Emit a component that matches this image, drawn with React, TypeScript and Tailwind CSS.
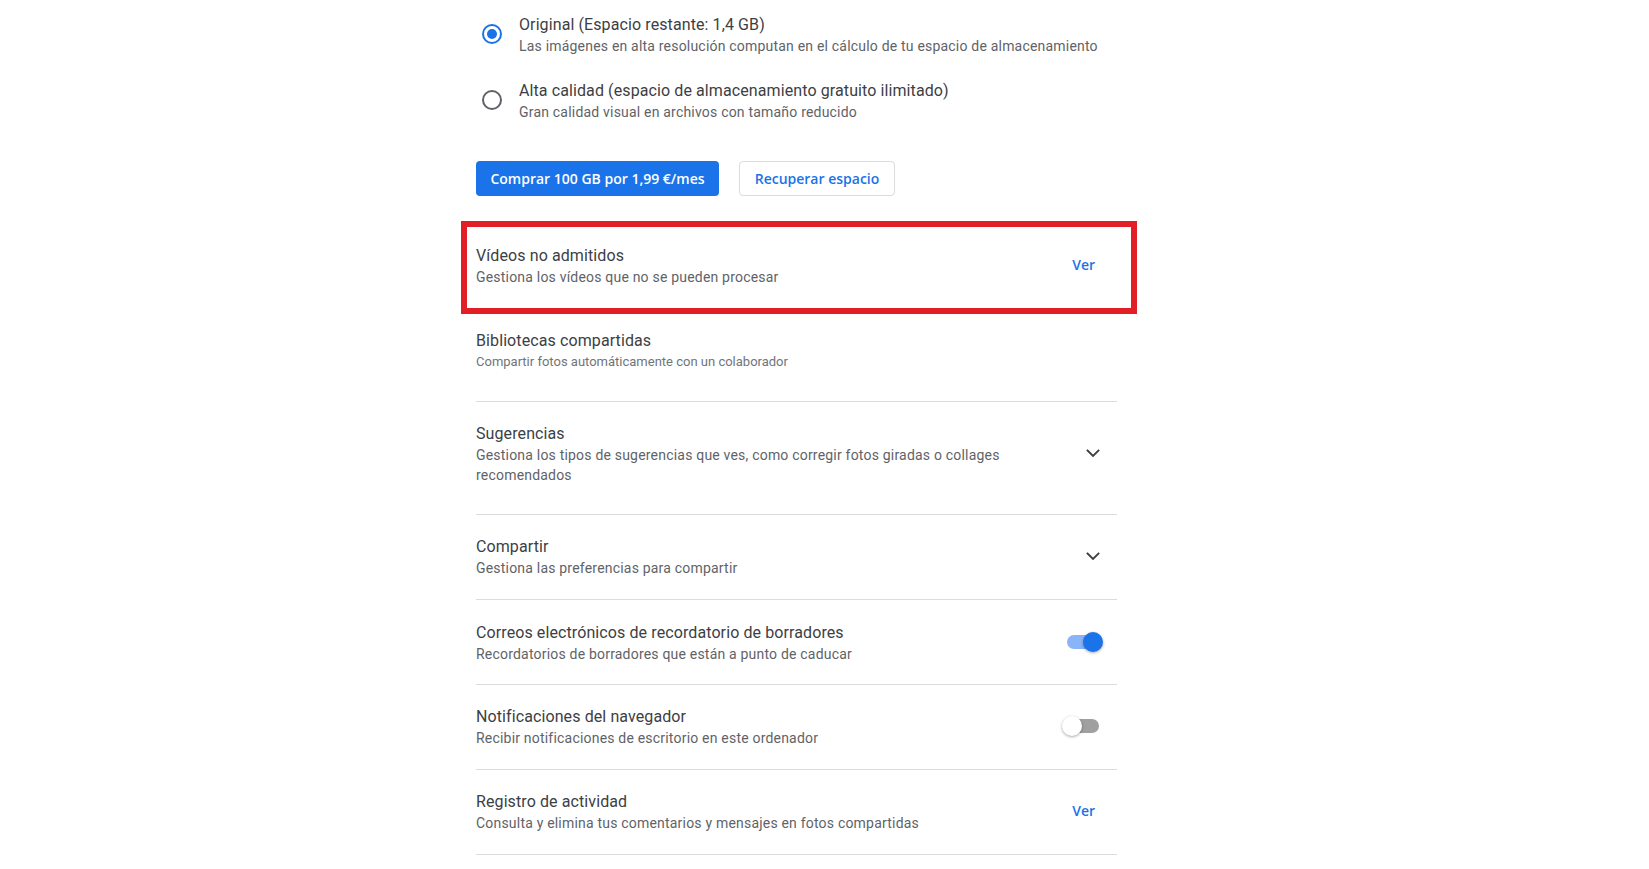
import React from "react";

function Radio({ selected }: { selected?: boolean }) {
  return (
    <div
      className={
        "ml-[6px] flex h-[20px] w-[20px] shrink-0 items-center justify-center rounded-full border-2 " +
        (selected ? "border-[#1a73e8]" : "border-[#5f6368]")
      }
    >
      {selected && <div className="h-[10px] w-[10px] rounded-full bg-[#1a73e8]" />}
    </div>
  );
}

function Title({ children }: { children: React.ReactNode }) {
  return <div className="pt-[2px] text-[16px] leading-[22px] tracking-[0.1px] text-[#3c4043]">{children}</div>;
}

function RadioRow({ selected, title, sub }: { selected?: boolean; title: string; sub: string }) {
  return (
    <div className="flex items-center gap-[17px]">
      <Radio selected={selected} />
      <div className="flex flex-col">
        <Title>{title}</Title>
        <div className="text-[14px] leading-[20px] tracking-[0.2px] text-[#5f6368]">{sub}</div>
      </div>
    </div>
  );
}

function Ver() {
  return (
    <div className="pr-[10px] font-['Open_Sans',sans-serif] text-[14px] font-semibold leading-[20px] text-[#1a73e8]">
      Ver
    </div>
  );
}

function Chevron() {
  return (
    <svg width="24" height="24" viewBox="0 0 24 24" fill="none" stroke="#3c4043" strokeWidth="1.9" strokeLinecap="square" strokeLinejoin="miter">
      <path d="M6.5 9.5l5.5 5.5 5.5-5.5" />
    </svg>
  );
}

function Toggle({ on }: { on?: boolean }) {
  return (
    <div className={on ? "mr-[4px] mb-[1px]" : "mr-[6px]"}>
      <div className={"relative h-[14px] w-[34px] rounded-full " + (on ? "bg-[#8ab4f8]" : "bg-[#a0a0a0]")}>
        <div
          className={
            "absolute top-[-3px] h-[20px] w-[20px] rounded-full shadow-[0_1px_3px_rgba(0,0,0,0.35)] " +
            (on ? "right-[-2px] bg-[#1a73e8]" : "left-[-3px] bg-white")
          }
        />
      </div>
    </div>
  );
}

function Row({
  title,
  sub,
  sub2,
  right,
  pt,
  pb,
  subClass = "text-[14px] tracking-[0.2px] text-[#5f6368]",
  children,
}: {
  title: string;
  sub: string;
  sub2?: string;
  right?: React.ReactNode;
  pt: string;
  pb: string;
  subClass?: string;
  children?: React.ReactNode;
}) {
  return (
    <div className={"relative flex items-center border-b border-[#dadce0] pr-[12px] " + pt + " " + pb}>
      <div className="flex min-w-0 flex-1 flex-col">
        <Title>{title}</Title>
        <div className={"w-[530px] leading-[20px] " + subClass}>
          {sub}
          {sub2 && (
            <>
              <br />
              {sub2}
            </>
          )}
        </div>
      </div>
      {right}
      {children}
    </div>
  );
}

export default function App() {
  return (
    <div className="min-h-screen bg-white font-['Roboto',sans-serif]">
      <div className="ml-[476px] w-[641px] pt-[12px]">
        <RadioRow
          selected
          title="Original (Espacio restante: 1,4 GB)"
          sub="Las imágenes en alta resolución computan en el cálculo de tu espacio de almacenamiento"
        />
        <div className="mt-[22px]">
          <RadioRow
            title="Alta calidad (espacio de almacenamiento gratuito ilimitado)"
            sub="Gran calidad visual en archivos con tamaño reducido"
          />
        </div>

        <div className="mt-[39px] flex gap-[20px] font-['Open_Sans',sans-serif] text-[14px] font-semibold">
          <button className="flex h-[35px] w-[243px] items-center justify-center rounded-[4px] bg-[#1a73e8] text-white">
            Comprar 100 GB por 1,99 €/mes
          </button>
          <button className="flex h-[35px] w-[156px] items-center justify-center rounded-[4px] border border-[#dadce0] bg-white text-[#1a73e8]">
            Recuperar espacio
          </button>
        </div>

        <div className="mt-[26px] flex flex-col">
          <Row
            title="Vídeos no admitidos"
            sub="Gestiona los vídeos que no se pueden procesar"
            right={<Ver />}
            pt="pt-[21px]"
            pb="pb-[21px]"
          >
            <div className="pointer-events-none absolute bottom-[-6px] left-[-15px] right-[-20px] top-[-1px] border-[6px] border-[#e21f26]" />
          </Row>
          <Row
            title="Bibliotecas compartidas"
            sub="Compartir fotos automáticamente con un colaborador"
            pt="pt-[19px]"
            pb="pb-[29px]"
            subClass="text-[13px] text-[#70757a]"
          />
          <Row
            title="Sugerencias"
            sub="Gestiona los tipos de sugerencias que ves, como corregir fotos giradas o collages"
            sub2="recomendados"
            right={<Chevron />}
            pt="pt-[19px]"
            pb="pb-[29px]"
          />
          <Row
            title="Compartir"
            sub="Gestiona las preferencias para compartir"
            right={<Chevron />}
            pt="pt-[19px]"
            pb="pb-[21px]"
          />
          <Row
            title="Correos electrónicos de recordatorio de borradores"
            sub="Recordatorios de borradores que están a punto de caducar"
            right={<Toggle on />}
            pt="pt-[20px]"
            pb="pb-[20px]"
          />
          <Row
            title="Notificaciones del navegador"
            sub="Recibir notificaciones de escritorio en este ordenador"
            right={<Toggle />}
            pt="pt-[19px]"
            pb="pb-[21px]"
          />
          <Row
            title="Registro de actividad"
            sub="Consulta y elimina tus comentarios y mensajes en fotos compartidas"
            right={<Ver />}
            pt="pt-[19px]"
            pb="pb-[21px]"
          />
        </div>
      </div>
    </div>
  );
}
